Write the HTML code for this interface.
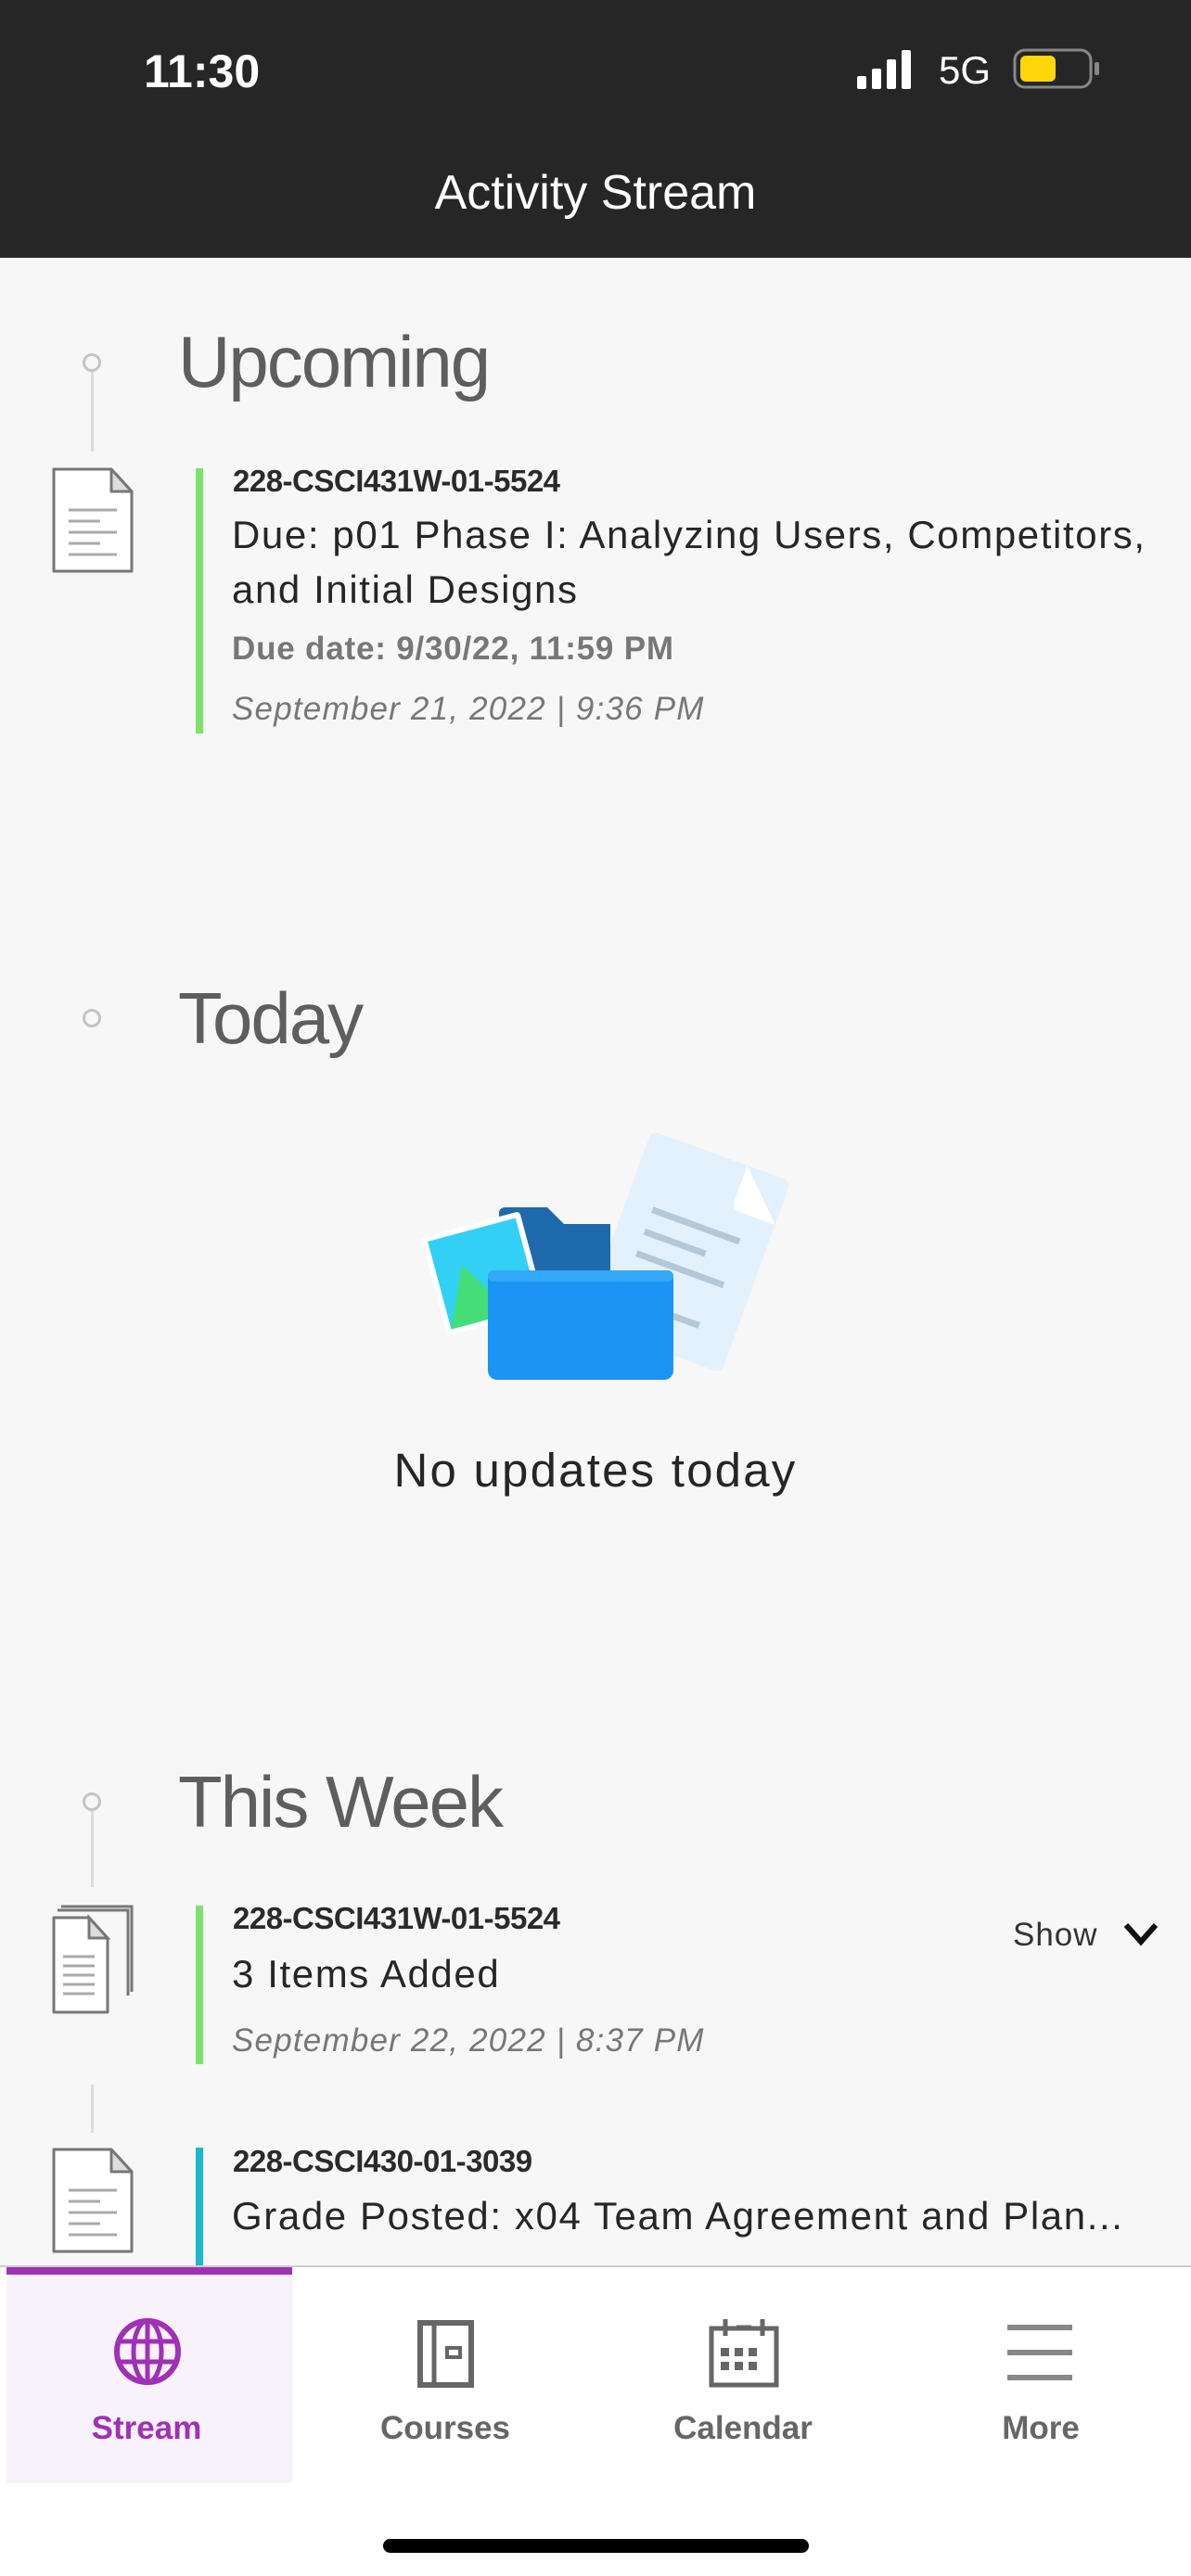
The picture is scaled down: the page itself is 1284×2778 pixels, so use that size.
<!DOCTYPE html>
<html><head><meta charset="utf-8"><style>
*{margin:0;padding:0;box-sizing:border-box}
body{width:1284px;height:2778px;background:#f7f7f7;font-family:"Liberation Sans",sans-serif;position:relative;overflow:hidden}
.abs{position:absolute;white-space:nowrap}
.hdr{position:absolute;left:0;top:0;width:1284px;height:278px;background:#262626}
.h1{font-size:78px;font-weight:300;color:#5e5e5e;letter-spacing:-2px}
.dot{position:absolute;width:20px;height:20px;border:3px solid #c4c4c4;border-radius:50%;background:#f7f7f7}
.vl{position:absolute;width:3px;background:#dcdcdc;left:98px}
.code{font-size:33px;font-weight:bold;color:#2a2a2a;letter-spacing:-0.5px}
.ttl{font-size:42px;color:#262626;letter-spacing:1.6px}
.dt{font-size:35px;font-style:italic;color:#777;letter-spacing:1.2px}
.bar{position:absolute;width:8px}
.tab{position:absolute;top:2444px;width:320px;height:234px;text-align:center}
.tab .lbl{position:absolute;left:0;right:0;top:155px;font-size:35px;font-weight:bold;color:#666}
</style></head><body>
<div class="hdr"></div>
<div class="abs" style="left:155px;top:48px;font-size:50px;font-weight:bold;color:#fff">11:30</div>
<svg class="abs" style="left:922px;top:54px" width="70" height="42"><rect x="2" y="28" width="10" height="14" rx="2" fill="#fff"/><rect x="18" y="20" width="10" height="22" rx="2" fill="#fff"/><rect x="34" y="10" width="10" height="32" rx="2" fill="#fff"/><rect x="50" y="0" width="10" height="42" rx="2" fill="#fff"/></svg>
<div class="abs" style="left:1012px;top:52px;font-size:42px;color:#fff">5G</div>
<svg class="abs" style="left:1092px;top:52px" width="96" height="46"><rect x="2" y="2" width="82" height="40" rx="11" fill="none" stroke="#888" stroke-width="3"/><rect x="8" y="8" width="38" height="28" rx="6" fill="#ffd60a"/><rect x="88" y="15" width="5" height="14" rx="2" fill="#888"/></svg>
<div class="abs" style="left:0;width:1284px;text-align:center;top:178px;font-size:52px;color:#fff">Activity Stream</div>

<div class="dot" style="left:89px;top:381px"></div>
<div class="vl" style="top:401px;height:86px"></div>
<div class="abs h1" style="left:192px;top:345px">Upcoming</div>
<svg class="abs" style="left:56px;top:504px" width="88" height="114"><path d="M2 2H64L86 26V112H2Z" fill="#fff" stroke="#777" stroke-width="3" stroke-linejoin="round"/><path d="M64 2V26H86Z" fill="#ddd" stroke="#777" stroke-width="3" stroke-linejoin="round"/><path d="M18 46H70M18 58H52M18 70H70M18 82H52M18 94H70" stroke="#aaa" stroke-width="3"/></svg>
<div class="bar" style="left:211px;top:505px;height:286px;background:#7de36a"></div>
<div class="abs code" style="left:251px;top:500px">228-CSCI431W-01-5524</div>
<div class="abs ttl" style="left:250px;top:553px">Due: p01 Phase I: Analyzing Users, Competitors,</div>
<div class="abs ttl" style="left:250px;top:612px">and Initial Designs</div>
<div class="abs" style="left:250px;top:680px;font-size:35px;font-weight:bold;color:#777;letter-spacing:0.8px">Due date: 9/30/22, 11:59 PM</div>
<div class="abs dt" style="left:250px;top:745px">September 21, 2022 | 9:36 PM</div>

<div class="dot" style="left:89px;top:1088px"></div>
<div class="abs h1" style="left:192px;top:1053px">Today</div>
<svg class="abs" style="left:440px;top:1220px" width="410" height="270">
<g transform="rotate(20 300 130)"><rect x="220" y="20" width="160" height="220" rx="8" fill="#e3f1fd"/><path d="M330 20L380 70H340Q330 70 330 60Z" fill="#fff"/><path d="M250 100H350M250 125H320M250 150H350M250 175H300M250 200H340" stroke="#b5c8d8" stroke-width="7"/></g>
<path d="M98 88Q98 82 106 82H150L168 100H218V180H98Z" fill="#1e6aad"/>
<g transform="rotate(-15 75 150)"><rect x="25" y="100" width="110" height="110" rx="4" fill="#fff"/><rect x="31" y="106" width="98" height="98" fill="#33d0f5"/><path d="M31 204L60 140L100 204Z" fill="#44dd77"/></g>
<rect x="86" y="150" width="200" height="118" rx="10" fill="#1a95f6"/><rect x="86" y="150" width="200" height="12" rx="6" fill="#33a8f8"/>
</svg>
<div class="abs" style="left:0;width:1284px;text-align:center;top:1556px;font-size:51px;color:#262626;letter-spacing:2.2px">No updates today</div>

<div class="dot" style="left:89px;top:1933px"></div>
<div class="vl" style="top:1953px;height:82px"></div>
<div class="abs h1" style="left:192px;top:1898px">This Week</div>
<svg class="abs" style="left:56px;top:2054px" width="90" height="118"><path d="M10 2H86V94" fill="none" stroke="#777" stroke-width="3"/><path d="M6 6H82V98" fill="none" stroke="#777" stroke-width="3"/><path d="M2 14H40L60 36V116H2Z" fill="#fff" stroke="#777" stroke-width="3" stroke-linejoin="round"/><path d="M40 14V36H60Z" fill="#ddd" stroke="#777" stroke-width="3"/><path d="M12 56H46M12 66H46M12 76H46M12 86H46M12 96H46" stroke="#aaa" stroke-width="3"/></svg>
<div class="bar" style="left:211px;top:2055px;height:171px;background:#7de36a"></div>
<div class="abs code" style="left:251px;top:2050px">228-CSCI431W-01-5524</div>
<div class="abs ttl" style="left:250px;top:2105px">3 Items Added</div>
<div class="abs dt" style="left:250px;top:2181px">September 22, 2022 | 8:37 PM</div>
<div class="abs" style="left:1092px;top:2067px;font-size:35px;color:#333;letter-spacing:1px">Show</div>
<svg class="abs" style="left:1210px;top:2072px" width="40" height="28"><path d="M4 4L20 22L36 4" fill="none" stroke="#111" stroke-width="6"/></svg>
<div class="vl" style="top:2248px;height:52px"></div>
<svg class="abs" style="left:56px;top:2316px" width="88" height="114"><path d="M2 2H64L86 26V112H2Z" fill="#fff" stroke="#777" stroke-width="3" stroke-linejoin="round"/><path d="M64 2V26H86Z" fill="#ddd" stroke="#777" stroke-width="3" stroke-linejoin="round"/><path d="M18 46H70M18 58H52M18 70H70M18 82H52M18 94H70" stroke="#aaa" stroke-width="3"/></svg>
<div class="bar" style="left:211px;top:2316px;height:130px;background:#1cb8c8"></div>
<div class="abs code" style="left:251px;top:2312px">228-CSCI430-01-3039</div>
<div class="abs ttl" style="left:250px;top:2366px">Grade Posted: x04 Team Agreement and Plan...</div>

<div class="abs" style="left:0;top:2443px;width:1284px;height:335px;background:#fff;border-top:2px solid #ccc"></div>
<div class="abs" style="left:7px;top:2445px;width:308px;height:233px;background:#f8f2fa;border-top:8px solid #a030b8"></div>
<div class="tab" style="left:0">
<svg style="position:absolute;left:122px;top:55px" width="74" height="74" viewBox="0 0 74 74"><circle cx="37" cy="37" r="33" fill="none" stroke="#a030b8" stroke-width="6"/><ellipse cx="37" cy="37" rx="15" ry="33" fill="none" stroke="#a030b8" stroke-width="5"/><path d="M37 4V70M5 26H69M5 48H69" stroke="#a030b8" stroke-width="5"/></svg>
<div class="lbl" style="color:#a030b8;left:0;width:316px">Stream</div></div>
<div class="tab" style="left:320px">
<svg style="position:absolute;left:130px;top:55px" width="62" height="76"><path d="M3 6H58V73H3Z" fill="none" stroke="#666" stroke-width="6"/><path d="M18 6V73" stroke="#666" stroke-width="5"/><rect x="32" y="33" width="14" height="10" fill="none" stroke="#666" stroke-width="4"/></svg>
<div class="lbl">Courses</div></div>
<div class="tab" style="left:641px">
<svg style="position:absolute;left:123px;top:55px" width="76" height="76"><rect x="3" y="12" width="70" height="61" fill="none" stroke="#666" stroke-width="5"/><path d="M18 2V20M58 2V20M30 11H46" stroke="#666" stroke-width="5"/><g fill="#666"><rect x="13" y="33" width="9" height="9"/><rect x="28" y="33" width="9" height="9"/><rect x="43" y="33" width="9" height="9"/><rect x="13" y="48" width="9" height="9"/><rect x="28" y="48" width="9" height="9"/><rect x="43" y="48" width="9" height="9"/></g></svg>
<div class="lbl">Calendar</div></div>
<div class="tab" style="left:962px">
<svg style="position:absolute;left:122px;top:60px" width="74" height="66"><path d="M2 6H72M2 33H72M2 60H72" stroke="#888" stroke-width="6"/></svg>
<div class="lbl">More</div></div>
<div class="abs" style="left:413px;top:2738px;width:459px;height:15px;border-radius:8px;background:#000"></div>
</body></html>
